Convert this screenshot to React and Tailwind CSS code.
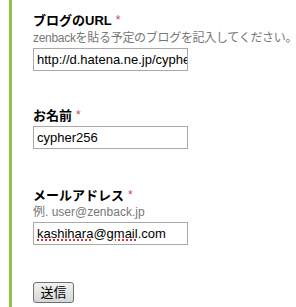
const jp = { fontFamily: '"Liberation Sans", "Noto Sans CJK JP", sans-serif' };

function Label({ children }) {
  return (
    <div className="flex h-[15px] items-center text-[13px] font-bold leading-[15px] text-black">
      {children}
      <span className="ml-[4px] text-[12px] font-normal text-[#c0504d]">*</span>
    </div>
  );
}

function Field({ children, className = '' }) {
  return (
    <div
      className={`flex h-[23px] w-[155px] items-center overflow-hidden whitespace-nowrap border border-[#a9a9a9] bg-white pl-[3px] text-[13px] text-black ${className}`}
    >
      {children}
    </div>
  );
}

export default function App() {
  return (
    <div className="min-h-[307px] w-[296px] overflow-hidden bg-white" style={jp}>
      <div className="ml-[9px] min-h-[307px] border-l-[3px] border-[#8cc63f] pl-[21px] pt-[13px]">
        <Label>ブログのURL</Label>
        <p className="mt-[3px] whitespace-nowrap text-[12px] leading-[15px] tracking-[-0.3px] text-[#777]">
          zenbackを貼る予定のブログを記入してください。
        </p>
        <Field className="mt-[2px]">http://d.hatena.ne.jp/cypher256</Field>

        <div className="mt-[37px]">
          <Label>お名前</Label>
          <Field className="mt-[3px]">cypher256</Field>
        </div>

        <div className="mt-[39px]">
          <Label>メールアドレス</Label>
          <p className="mt-[2px] text-[12px] leading-[15px] text-[#777]">例. user@zenback.jp</p>
          <Field className="mt-[2px]">
            <span className="underline decoration-[#e03030] decoration-dotted decoration-2 underline-offset-2">kashihara</span>
            <span>@</span>
            <span className="underline decoration-[#e03030] decoration-dotted decoration-2 underline-offset-2">gmail</span>
            <span>.com</span>
          </Field>
        </div>

        <button className="mt-[37px] flex h-[21px] w-[41px] items-center justify-center rounded-[3px] border border-[#707070] bg-gradient-to-b from-[#f2f2f2] to-[#d6d6d6] text-[13px] text-black">
          送信
        </button>
      </div>
    </div>
  );
}
